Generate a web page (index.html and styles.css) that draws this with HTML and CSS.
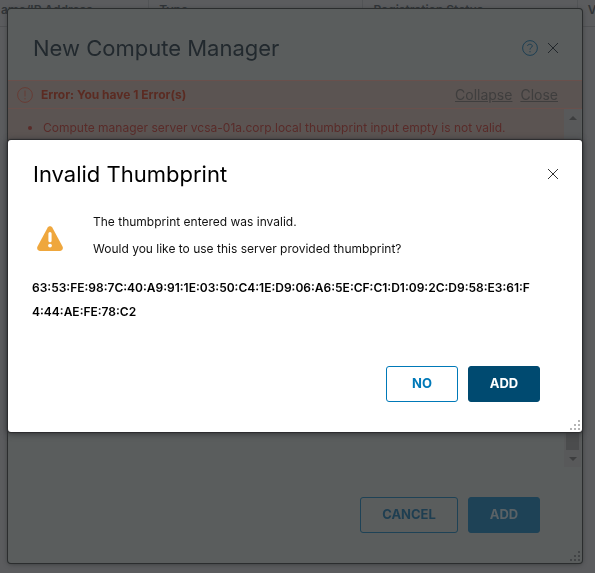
FILE: index.html
```html
<!DOCTYPE html>
<html lang="en">
<head>
<meta charset="utf-8">
<title>Compute Managers</title>
<link rel="stylesheet" href="styles.css">
</head>
<body>
<table class="grid">
  <thead><tr><th class="name">ame/IP Address</th><th class="type">Type</th><th class="status">Registration Status</th><th>V</th></tr></thead>
</table>

<div class="layer">
  <section class="dialog dialog-back" role="dialog" aria-labelledby="manager-title">
    <header class="dialog-head">
      <h1 id="manager-title">New Compute Manager</h1>
      <button class="icon-button" type="button" aria-label="Help">
        <svg width="16" height="16" viewBox="0 0 16 16" fill="none" stroke="#1d3f53"><circle cx="8" cy="8" r="7.4"/><path d="M5.7 6V5.5C5.9 3.8 10.3 3.7 10.3 6C10.3 7.7 8 7.3 8 9.6M8 11v1.3"/></svg>
      </button>
      <button class="icon-button" type="button" aria-label="Close dialog">
        <svg width="16" height="16" viewBox="0 0 16 16" fill="none" stroke="#22272b"><path d="M3 3l10 10M13 3L3 13"/></svg>
      </button>
    </header>
    <div class="error-bar">
      <svg width="16" height="16" viewBox="0 0 16 16" fill="none" stroke="#673c35"><circle cx="8" cy="8" r="7.4"/><path d="M8 3.5v6M8 11v1.4"/></svg>
      <strong>Error: You have 1 Error(s)</strong>
      <a href="#collapse">Collapse</a>
      <a href="#close">Close</a>
    </div>
    <div class="dialog-scroll">
      <ul class="errors"><li>Compute manager server vcsa-01a.corp.local thumbprint input empty is not valid.</li></ul>
      <div class="scrollbar" aria-hidden="true">
        <span class="arrow arrow-up"></span>
        <span class="thumb"></span>
        <span class="arrow arrow-down"></span>
      </div>
    </div>
    <footer class="actions">
      <button class="button button-outline" type="button">CANCEL</button>
      <button class="button button-solid" type="button">ADD</button>
    </footer>
    <svg class="grip" width="10" height="10" viewBox="0 0 10 10"><path d="M8 0h2v2H8zM4 4h2v2H4zM8 4h2v2H8zM0 8h2v2H0zM4 8h2v2H4zM8 8h2v2H8z"/></svg>
  </section>
</div>

<div class="layer">
  <section class="dialog dialog-front" role="dialog" aria-modal="true" aria-labelledby="thumb-title">
    <header class="dialog-head">
      <h2 id="thumb-title">Invalid Thumbprint</h2>
      <button class="icon-button" type="button" aria-label="Close dialog">
        <svg width="16" height="16" viewBox="0 0 16 16" fill="none" stroke="#333"><path d="M3 3l10 10M13 3L3 13"/></svg>
      </button>
    </header>
    <div class="message">
      <svg width="26" height="25" viewBox="0 0 26 25"><path fill="#efa73d" d="M10.7 1.5C11.8-.3 14.2-.3 15.3 1.5L25.5 20.5C26.6 22.7 25.2 25 22.8 25H3.2C.8 25-.6 22.7.5 20.5z"/><path stroke="#fff" stroke-width="3.2" stroke-linecap="round" d="M13 7.7v7"/><circle cx="13" cy="19.6" r="1.9" fill="#fff"/></svg>
      <div>
        <p>The thumbprint entered was invalid.</p>
        <p>Would you like to use this server provided thumbprint?</p>
      </div>
    </div>
    <p class="thumbprint">63:53:FE:98:7C:40:A9:91:1E:03:50:C4:1E:D9:06:A6:5E:CF:C1:D1:09:2C:D9:58:E3:61:F<wbr>4:44:AE:FE:78:C2</p>
    <footer class="actions">
      <button class="button button-outline" type="button">NO</button>
      <button class="button button-solid" type="button">ADD</button>
    </footer>
    <svg class="grip" width="10" height="10" viewBox="0 0 10 10"><path d="M8 0h2v2H8zM4 4h2v2H4zM8 4h2v2H8zM0 8h2v2H0zM4 8h2v2H4zM8 8h2v2H8z"/></svg>
  </section>
</div>
</body>
</html>
```
FILE: styles.css
```css
* { box-sizing: border-box; }
body {
  margin: 0;
  height: 100vh;
  overflow: hidden;
  background: #5b5c5e;
  font-family: Inter, "Open Sans", sans-serif;
  font-size: 12px;
}
h1, h2, p, ul { margin: 0; padding: 0; }
button { font: inherit; }

.grid {
  width: 100%;
  table-layout: fixed;
  border-collapse: collapse;
  color: #303437;
}
.grid th {
  height: 26px;
  padding: 0 0 6px 10px;
  border-bottom: 1px solid #505153;
  border-right: 1px solid #525456;
  font-weight: 600;
  text-align: left;
  white-space: nowrap;
}
.grid .name { width: 25%; padding-left: 1px; }
.grid .type { width: 36%; }
.grid .status { width: 36%; }
.grid th:last-child { border-right: 0; }

.layer {
  position: fixed;
  inset: 0;
  display: grid;
  align-items: center;
  padding: 9px 13px 10px 8px;
}
.dialog {
  position: relative;
  display: flex;
  flex-direction: column;
  border-radius: 3px;
}
.dialog-back {
  height: 100%;
  background: #5a5d5d;
  box-shadow: 0 0 0 1px #2b2d2e, 0 1px 5px #36383a;
  color: #22292e;
}
.dialog-front {
  background: #fff;
  box-shadow: 0 0 1px 1px #2c2c2e, 0 1px 6px 1px #36383a;
  color: #000;
}

.dialog-head {
  display: flex;
  align-items: center;
  gap: 7px;
  padding: 0 21px 0 25px;
}
.dialog-back .dialog-head { height: 71px; flex: none; padding-top: 7px; }
.dialog-front .dialog-head { height: 67px; }
.dialog-head h1, .dialog-head h2 {
  flex: 1;
  font-size: 22px;
  font-weight: 400;
  line-height: 28px;
}
.icon-button {
  display: flex;
  padding: 0;
  border: 0;
  background: none;
}

.error-bar {
  display: flex;
  flex: none;
  align-items: center;
  height: 29px;
  padding: 0 24px 0 9px;
  gap: 8px;
  border: 1px solid #69504c;
  border-width: 1px 0;
  background: #5b5452;
  color: #5b2b22;
}
.error-bar strong { flex: 1; font-weight: 700; }
.error-bar a { color: #3f3e3e; font-size: 14px; }

.dialog-scroll {
  display: flex;
  flex: 1;
  align-items: stretch;
  padding-right: 1px;
}
.errors {
  flex: 1;
  align-self: flex-start;
  height: 36px;
  padding: 0 0 0 35px;
  background: #5b5452;
  color: #592b29;
  line-height: 38px;
  white-space: nowrap;
}
.scrollbar {
  display: flex;
  flex-direction: column;
  align-items: center;
  width: 17px;
  background: #58595a;
}
.arrow {
  height: 17px;
  display: flex;
  align-items: center;
}
.arrow::before {
  content: "";
  border: 4px solid transparent;
}
.arrow-up::before { border-top: 0; border-bottom-color: #3d3e3f; }
.arrow-down::before { border-bottom: 0; border-top-color: #3d3e3f; }
.thumb { flex: 1; width: 13px; margin-top: 40px; background: #4b4c4d; }

.actions {
  display: flex;
  justify-content: flex-end;
  gap: 10px;
  padding: 30px 42px;
}
.dialog-front .actions { padding-top: 42px; }
.button {
  min-width: 72px;
  height: 36px;
  padding: 0 19px 3px;
  border: 1px solid;
  border-radius: 3px;
  font-size: 13px;
  font-weight: 700;
}
.button-outline { background: none; border-color: #0079b8; color: #0079b8; }
.button-solid { background: #004a70; border-color: #004a70; color: #fff; }
.dialog-back .button-outline { min-width: 98px; border-color: #1e4256; color: #1e3e51; }
.dialog-back .button-solid { background: #1e4256; border-color: #1e4256; color: #5a6266; }

.grip {
  position: absolute;
  right: 2px;
  bottom: 2px;
  fill: #b5b5b5;
}
.dialog-back .grip { fill: #424446; }

.message {
  display: flex;
  align-items: center;
  gap: 30px;
  padding: 1px 29px 0;
  color: #111;
  line-height: 27px;
}
.message svg { flex: none; margin-top: 6px; }
.thumbprint {
  padding: 14px 24px 0;
  font-weight: 600;
  line-height: 24px;
}
```
